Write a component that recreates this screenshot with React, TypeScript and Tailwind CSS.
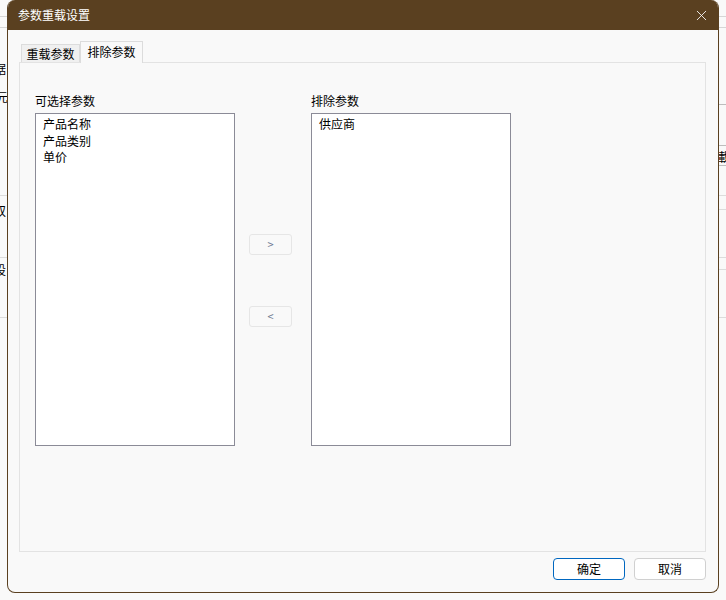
import { X } from "lucide-react";

const available = ["产品名称", "产品类别", "单价"];
const excluded = ["供应商"];

function BackdropWindow() {
  // the window behind the dialog, only slivers of it show at the edges
  return (
    <div className="absolute inset-0 bg-[#f9f9f9] text-[12px] text-black">
      <div className="absolute left-0 top-[16px] h-px w-full bg-[#d6d6d6]" />
      <div className="absolute left-0 top-[27px] h-px w-full bg-[#d6d6d6]" />
      <div className="absolute left-0 top-[195px] h-px w-full bg-[#dcdcdc]" />
      <div className="absolute left-0 top-[257px] h-px w-full bg-[#dcdcdc]" />
      <div className="absolute left-0 top-[317px] h-px w-full bg-[#dcdcdc]" />
      <div className="absolute right-0 top-[104px] h-px w-[10px] bg-[#bdbdbd]" />
      <div className="absolute right-0 top-[145px] h-px w-[10px] bg-[#bdbdbd]" />
      <div className="absolute right-0 top-[165px] h-px w-[10px] bg-[#bdbdbd]" />
      <div className="absolute right-0 top-[209px] h-px w-[10px] bg-[#dcdcdc]" />
      <div className="absolute right-0 top-[269px] h-px w-[10px] bg-[#dcdcdc]" />
      <span className="absolute left-[-6px] top-[60px]">据</span>
      <span className="absolute left-[-4px] top-[88px]">元</span>
      <span className="absolute left-[-6px] top-[202px]">双</span>
      <span className="absolute left-[-6px] top-[261px]">设</span>
      <span className="absolute left-[718px] top-[148px]">載</span>
    </div>
  );
}

function ListBox({ items }: { items: string[] }) {
  return (
    <div className="h-[333px] w-[200px] border border-[#8b8b97] bg-white px-[7px] pt-[2px]">
      {items.map((item) => (
        <div key={item} className="h-[16.5px] leading-[16px]">
          {item}
        </div>
      ))}
    </div>
  );
}

function MoveButton({ label }: { label: string }) {
  return (
    <button className="flex h-[21px] w-[43px] items-center justify-center rounded-[3px] border border-[#e6e6e6] bg-[#f9f9f9] text-[11px] text-[#6f7a92]">
      {label}
    </button>
  );
}

export default function App() {
  return (
    <div
      className="relative h-[600px] w-[726px] overflow-hidden"
      style={{ fontFamily: '"Noto Sans CJK SC", "Noto Sans", sans-serif' }}
    >
      <BackdropWindow />

      <div className="absolute left-[7px] top-0 flex h-[593px] w-[712px] flex-col overflow-hidden rounded-t-[8px] rounded-b-[8px] border border-t-0 border-[#5a4020] bg-[#f9f9f9] text-[12px] text-black">
        <div className="flex h-[30px] shrink-0 items-center justify-between bg-[#5a4020] pl-[10px] pr-[8px] text-white">
          <span className="text-[12px]">参数重载设置</span>
          <X className="h-[17px] w-[17px]" strokeWidth={1.2} />
        </div>

        <div className="flex flex-1 flex-col pl-[11px] pr-[12px] pt-[11px]">
          <div className="flex h-[21px] items-end pl-[2px]">
            <div className="flex h-[18px] w-[59px] items-center justify-center border border-b-0 border-[#dcdcdc] bg-[#f0f0f0]">
              重载参数
            </div>
            <div className="relative z-10 -mb-px flex h-[22px] w-[63px] items-center justify-center border border-b-0 border-[#dcdcdc] bg-[#f9f9f9] pb-[2px]">
              排除参数
            </div>
          </div>

          <div className="flex h-[490px] border border-[#e3e3e3] bg-[#f9f9f9] pl-[15px] pt-[29px]">
            <div className="flex flex-col">
              <div className="h-[21px] leading-[18px]">可选择参数</div>
              <ListBox items={available} />
            </div>

            <div className="ml-[14px] mr-[19px] flex flex-col gap-[51px] pt-[142px]">
              <MoveButton label=">" />
              <MoveButton label="<" />
            </div>

            <div className="flex flex-col">
              <div className="h-[21px] leading-[18px]">排除参数</div>
              <ListBox items={excluded} />
            </div>
          </div>

          <div className="flex justify-end gap-[9px] pt-[6px]">
            <button className="h-[22px] w-[72px] rounded-[4px] border border-[#0067c0] bg-white">确定</button>
            <button className="h-[22px] w-[72px] rounded-[4px] border border-[#d0d0d0] bg-white">取消</button>
          </div>
        </div>
      </div>
    </div>
  );
}
